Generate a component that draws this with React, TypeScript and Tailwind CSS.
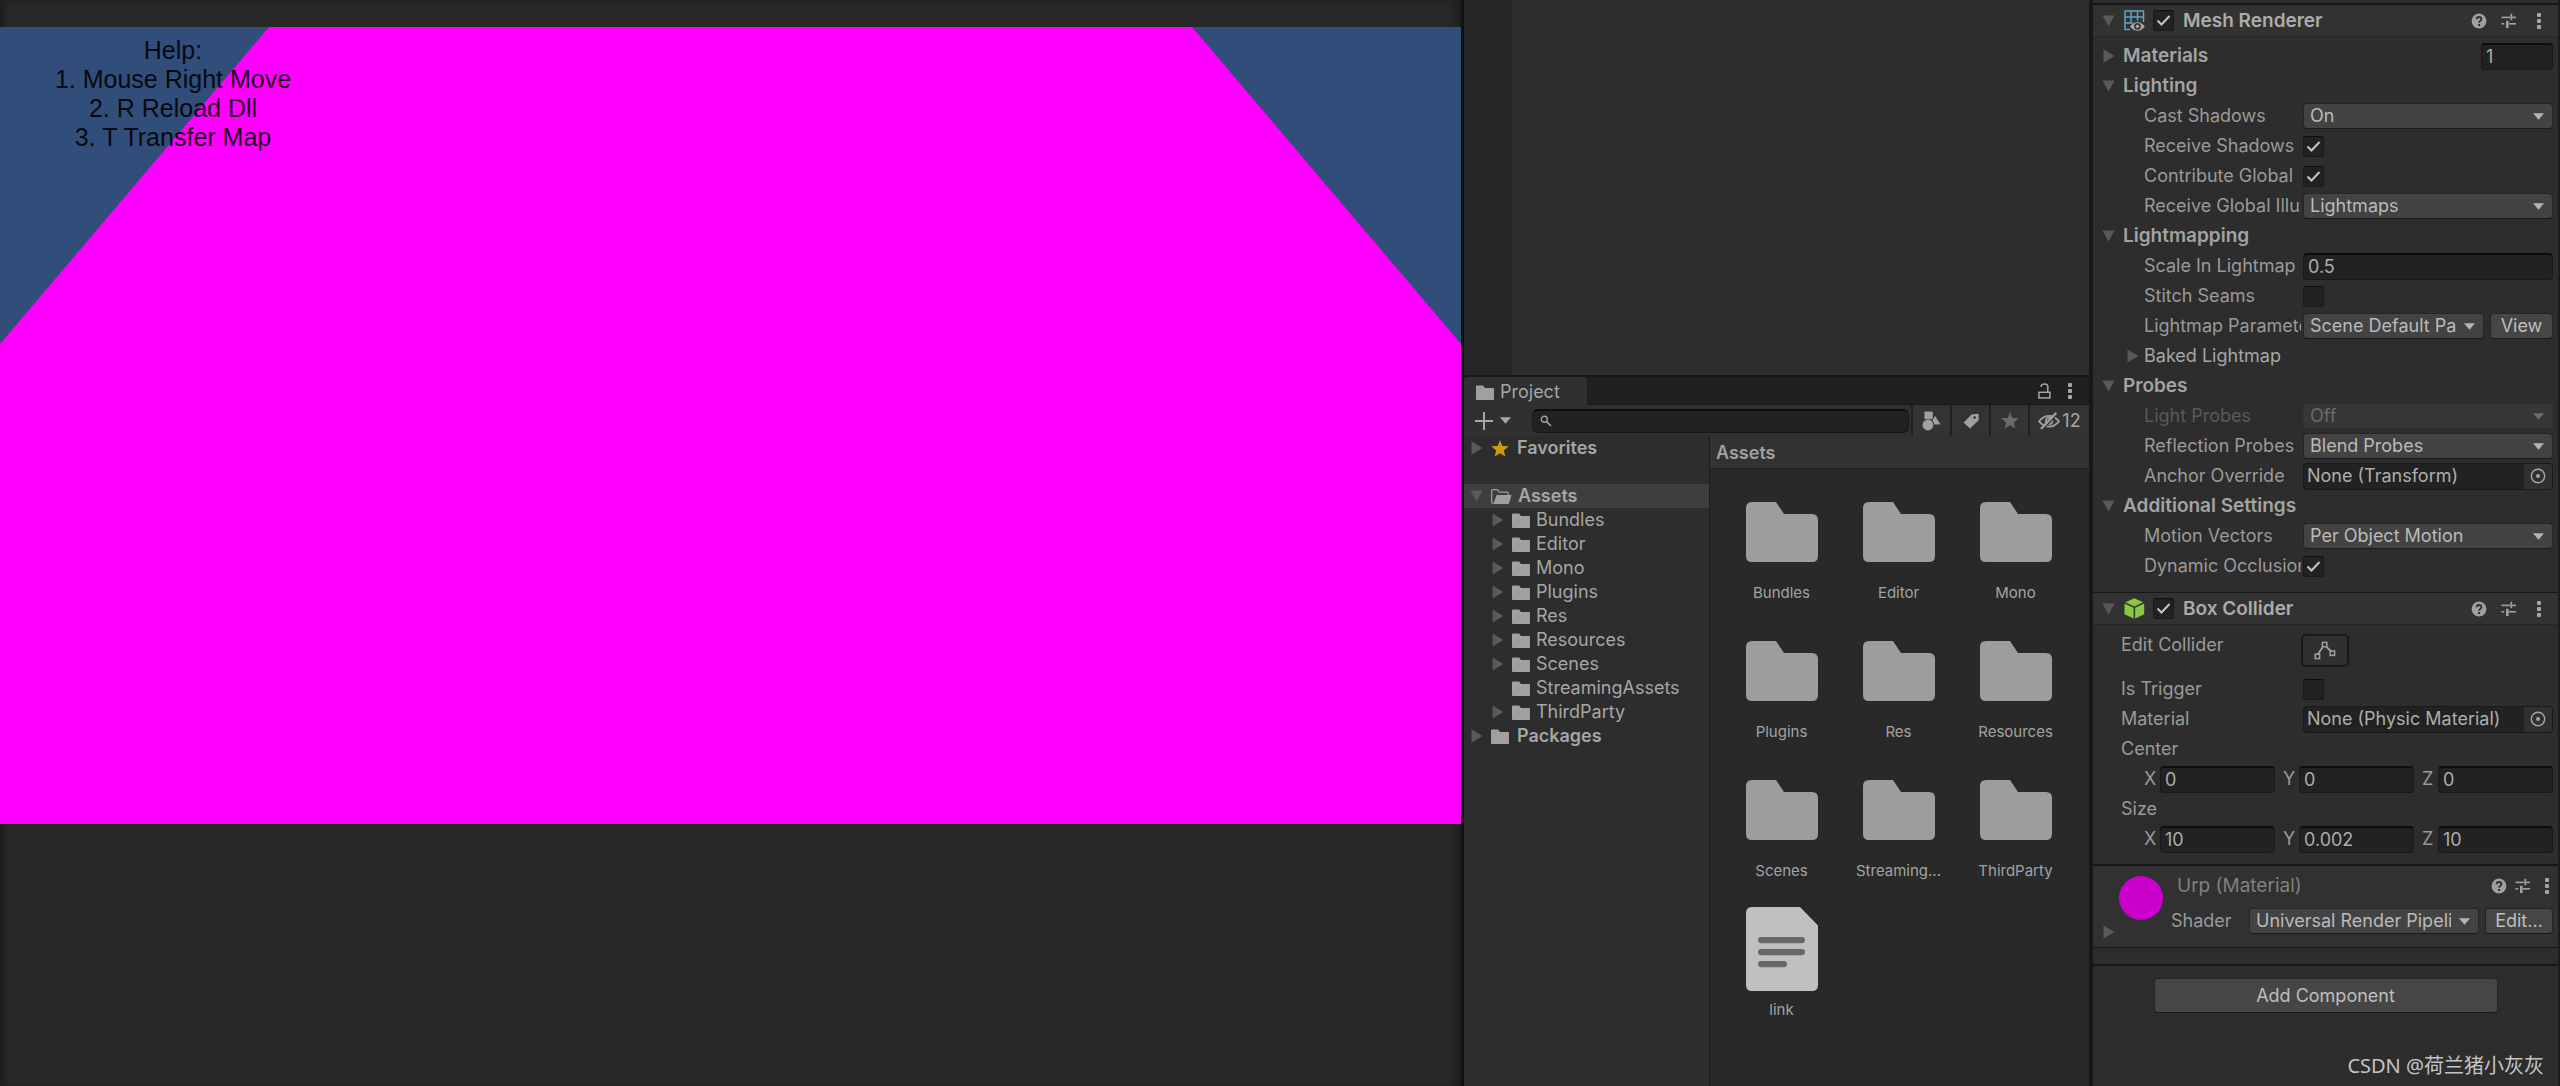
import React, { useId } from "react";

const CHILD_FOLDERS = [
  { name: "Bundles", nested: true },
  { name: "Editor", nested: true },
  { name: "Mono", nested: true },
  { name: "Plugins", nested: true },
  { name: "Res", nested: true },
  { name: "Resources", nested: true },
  { name: "Scenes", nested: true },
  { name: "StreamingAssets", nested: false },
  { name: "ThirdParty", nested: true },
];

const GRID_ITEMS = [
  "Bundles",
  "Editor",
  "Mono",
  "Plugins",
  "Res",
  "Resources",
  "Scenes",
  "Streaming...",
  "ThirdParty",
];

/* ---------- icons ---------- */

function FoldClosed() {
  return (
    <svg viewBox="0 0 12 14" className="h-[14px] w-3 shrink-0 fill-[#595959]" aria-hidden>
      <path d="M0.5 0.5L11.5 7L0.5 13.5Z" />
    </svg>
  );
}

function FoldOpen() {
  return (
    <svg viewBox="0 0 13 12" className="h-3 w-[13px] shrink-0 fill-[#595959]" aria-hidden>
      <path d="M0.5 0.5H12.5L6.5 11.5Z" />
    </svg>
  );
}

function Caret({ className }: { className: string }) {
  return (
    <svg viewBox="0 0 11 7" className={className} aria-hidden>
      <path d="M0 0.3H11L5.5 6.8Z" />
    </svg>
  );
}

function SmallFolder() {
  return (
    <svg viewBox="0 0 18 15" className="h-[15px] w-[18px] shrink-0 fill-[#a0a0a0]" aria-hidden>
      <path d="M0 1.5Q0 0.5 1 0.5H7L9 3H17Q18 3 18 4V14Q18 15 17 15H1Q0 15 0 14Z" />
    </svg>
  );
}

function OpenFolder() {
  return (
    <svg viewBox="0 0 21 15" className="h-[15px] w-[21px] shrink-0" aria-hidden>
      <path
        d="M2.6 14.2H1.7Q0.7 14.2 0.7 13.2V1.6Q0.7 0.7 1.7 0.7H6.6L8.4 3.2H16.4Q17.3 3.2 17.3 4.2V6"
        fill="none"
        stroke="#a0a0a0"
        strokeWidth="1.2"
      />
      <path d="M5.6 6H20.6L18 14.2Q17.8 15 17 15H2.4Z" fill="#a0a0a0" />
    </svg>
  );
}

function BigFolder() {
  return (
    <svg viewBox="0 0 72 60" className="h-[60px] w-[72px] fill-[#9d9d9d]" aria-hidden>
      <path d="M6 0H30L38 12H66Q72 12 72 18V54Q72 60 66 60H6Q0 60 0 54V6Q0 0 6 0Z" />
    </svg>
  );
}

function TextFile() {
  return (
    <svg viewBox="0 0 72 84" className="h-[84px] w-[72px]" aria-hidden>
      <path d="M6 0H54L72 18.5V78Q72 84 66 84H6Q0 84 0 78V6Q0 0 6 0Z" fill="#c0c0c0" />
      <g fill="#676767">
        <rect x="12" y="30" width="47" height="6.2" rx="3.1" />
        <rect x="12" y="42" width="47" height="6.2" rx="3.1" />
        <rect x="12" y="54" width="29" height="6.2" rx="3.1" />
      </g>
    </svg>
  );
}

function Star({ className }: { className: string }) {
  return (
    <svg viewBox="0 0 18 17" className={className} aria-hidden>
      <path d="M9 0L11.3 5.9L17.8 6.3L12.8 10.4L14.4 16.6L9 13.2L3.6 16.6L5.2 10.4L0.2 6.3L6.7 5.9Z" />
    </svg>
  );
}

function Dots() {
  return (
    <svg viewBox="0 0 4 16" className="h-4 w-1 fill-[#a6a6a6]" aria-hidden>
      <rect x="0" y="0" width="4" height="4" rx="0.9" />
      <rect x="0" y="6" width="4" height="4" rx="0.9" />
      <rect x="0" y="12" width="4" height="4" rx="0.9" />
    </svg>
  );
}

function HelpIcon() {
  return (
    <svg viewBox="0 0 16 16" className="size-4" aria-hidden>
      <circle cx="8" cy="8" r="7.4" fill="#a0a0a0" />
      <path
        d="M5.7 6.3Q5.7 4 8 4Q10.4 4 10.4 6.1Q10.4 7.3 9.2 8Q8.1 8.6 8.1 9.8"
        fill="none"
        stroke="#2f2f2f"
        strokeWidth="1.8"
      />
      <rect x="7.1" y="11" width="2" height="2" fill="#2f2f2f" />
    </svg>
  );
}

function PresetIcon() {
  return (
    <svg viewBox="0 0 16 16" className="size-4" fill="#a0a0a0" aria-hidden>
      <rect x="0.5" y="3.6" width="8.5" height="1.6" />
      <rect x="9.4" y="0.8" width="1.8" height="6.4" />
      <rect x="11" y="3.6" width="4" height="1.6" />
      <rect x="0.5" y="10" width="2.6" height="1.6" />
      <rect x="5" y="7.8" width="2.6" height="7.2" />
      <rect x="7.6" y="10" width="7.4" height="1.6" />
    </svg>
  );
}

function MeshIcon() {
  return (
    <svg viewBox="0 0 21 21" className="size-[21px] shrink-0" aria-hidden>
      <path
        d="M6 19.4H1V1H19.5V12M1 7H19.5M1 13H9M7 1V13M13.5 1V10.8"
        fill="none"
        stroke="#5aa6c4"
        strokeWidth="1.5"
      />
      <path d="M6 16.5Q9.5 12 13.4 12Q17.4 12 20.8 16.5Q17.4 20.8 13.4 20.8Q9.5 20.8 6 16.5Z" fill="#a6a6a6" />
      <circle cx="13.4" cy="16.4" r="3.3" fill="#323232" />
      <circle cx="13.4" cy="16.4" r="1.7" fill="#a6a6a6" />
    </svg>
  );
}

function CubeIcon() {
  return (
    <svg viewBox="0 0 21 21" className="size-[21px] shrink-0" fill="#8ac83f" aria-hidden>
      <path d="M10.3 0.3L19.2 4.3L10.3 8.4L1.4 4.3Z" />
      <path d="M0.5 5.6L9.6 9.8V20.6L0.5 16.2Z" />
      <path d="M20.2 5.6L11.1 9.8V20.6L20.2 16.2Z" />
    </svg>
  );
}

function LockIcon() {
  return (
    <svg viewBox="0 0 13 16" className="h-4 w-[13px]" fill="none" stroke="#a6a6a6" strokeWidth="1.5" aria-hidden>
      <rect x="0.9" y="9.3" width="11" height="5.6" />
      <path d="M3.2 4V3Q3.6 1 6.6 1Q9.8 1 9.8 3.6V9" />
    </svg>
  );
}

function SearchIcon() {
  return (
    <svg viewBox="0 0 12 12" className="size-3 shrink-0" fill="none" stroke="#a0a0a0" aria-hidden>
      <circle cx="4.3" cy="4.3" r="3" strokeWidth="1.4" />
      <path d="M6.6 6.6L11 11" strokeWidth="1.6" />
    </svg>
  );
}

function ShapesIcon() {
  return (
    <svg viewBox="0 0 19 20" className="h-5 w-[19px]" fill="#a0a0a0" aria-hidden>
      <rect x="2.4" y="0.6" width="8.4" height="7.6" />
      <circle cx="5.9" cy="14" r="5.4" />
      <path d="M13 4.8L18.6 13.6H12.4L10.6 9.4Z" />
    </svg>
  );
}

function TagIcon() {
  return (
    <svg viewBox="0 0 16 16" className="size-4" aria-hidden>
      <path d="M8.6 1.4L14.4 0.8Q15.6 0.8 15.6 2V7.2L7 15.4L0.6 9.4Z" fill="#a0a0a0" />
      <circle cx="11.6" cy="4.6" r="1.3" fill="#333333" />
    </svg>
  );
}

function HiddenEyeIcon() {
  return (
    <svg viewBox="0 0 22 18" className="h-[18px] w-[22px] shrink-0" fill="none" stroke="#a0a0a0" aria-hidden>
      <path d="M1 9.4Q5.4 3.8 11 3.8Q16.6 3.8 21 9.4Q16.6 14.6 11 14.6Q5.4 14.6 1 9.4Z" strokeWidth="1.8" />
      <circle cx="11" cy="9" r="3.2" strokeWidth="1.8" />
      <path d="M4.4 17.8L19.6 1.6" stroke="#333333" strokeWidth="1.6" />
      <path d="M3 17L18.4 0.8" strokeWidth="2.2" />
    </svg>
  );
}

function ColliderIcon() {
  return (
    <svg viewBox="0 0 22 19" className="h-[19px] w-[22px]" fill="none" stroke="#a0a0a0" aria-hidden>
      <g strokeWidth="1.5">
        <rect x="1.2" y="13.2" width="4.4" height="4.4" />
        <rect x="8.4" y="1.4" width="4.4" height="4.4" />
        <rect x="16.2" y="10" width="4.4" height="4.4" />
      </g>
      <path d="M4 13L8.8 6M12.4 6L17 10" strokeWidth="1.8" />
    </svg>
  );
}

/* ---------- form controls ---------- */

const LABEL = "min-w-0 overflow-hidden whitespace-nowrap";

function Tick({ checked, label, id }: { checked: boolean; label?: string; id?: string }) {
  return (
    <span className="grid size-[21px] shrink-0 grid-cols-1">
      <input
        id={id}
        type="checkbox"
        defaultChecked={checked}
        aria-label={label}
        className="peer col-start-1 row-start-1 size-[21px] appearance-none rounded-[3px] border border-[#191919] border-t-[#0d0d0d] bg-[#222222]"
      />
      <svg
        viewBox="0 0 21 21"
        className="pointer-events-none col-start-1 row-start-1 hidden size-[21px] peer-checked:block"
        fill="none"
        stroke="#c4c4c4"
        strokeWidth="2"
        aria-hidden
      >
        <path d="M4.5 10.5L8.5 14.5L16.5 6" />
      </svg>
    </span>
  );
}

function TextBox({ value, id, label, className }: { value: string; id?: string; label?: string; className: string }) {
  return (
    <input
      id={id}
      type="text"
      defaultValue={value}
      aria-label={label}
      className={
        "h-[27px] min-w-0 rounded-[4px] border border-[#191919] border-t-2 border-t-[#0d0d0d] bg-[#222222] px-1 text-[18px] text-[#adadad] outline-none " +
        className
      }
    />
  );
}

function Dropdown({
  value,
  id,
  disabled,
  tight,
}: {
  value: string;
  id: string;
  disabled?: boolean;
  tight?: boolean;
}) {
  return (
    <span className="relative flex min-w-0 flex-1">
      <select
        id={id}
        disabled={disabled}
        className={
          "h-[26px] w-full appearance-none overflow-hidden rounded-[4px] border pl-[6px] leading-6 opacity-100 outline-none " +
          (tight ? "pr-[27px] " : "pr-8 ") +
          (disabled
            ? "border-[#323232] bg-[#373737] text-[#6b6b6b]"
            : "border-[#252525] border-b-[#1b1b1b] bg-[#434343] text-[#bababa]")
        }
      >
        <option>{value}</option>
      </select>
      <Caret
        className={
          "pointer-events-none absolute top-[10px] right-[9px] h-[7px] w-[11px] " +
          (disabled ? "fill-[#6b6b6b]" : "fill-[#b4b4b4]")
        }
      />
    </span>
  );
}

function PushButton({ children, className }: { children: React.ReactNode; className: string }) {
  return (
    <button
      type="button"
      className={
        "rounded-[4px] border border-[#252525] border-b-[#1b1b1b] bg-[#464646] text-center text-[#bebebe] " +
        className
      }
    >
      {children}
    </button>
  );
}

function Section({ title }: { title: string }) {
  return (
    <div className="flex h-[30px] items-center gap-2 pr-[5px] pl-[9px] text-[19px] font-semibold text-[#a3a3a3]">
      <FoldOpen />
      <h3 className="flex-1">{title}</h3>
    </div>
  );
}

function Row({
  label,
  muted,
  outer,
  render,
}: {
  label: string;
  muted?: boolean;
  outer?: boolean;
  render?: (id: string) => React.ReactNode;
}) {
  const id = useId();
  return (
    <div className={"flex h-[30px] items-center pr-[5px] " + (outer ? "pl-7" : "pl-[51px]")}>
      <label
        htmlFor={id}
        className={
          LABEL + " shrink-0 " + (outer ? "w-[180px] " : "w-[157px] ") + (muted ? "text-[#595959]" : "text-[#9a9a9a]")
        }
      >
        {label}
      </label>
      <div className="ml-[2px] flex min-w-0 flex-1 items-center gap-[6px]">{render?.(id)}</div>
    </div>
  );
}

function ObjectField({ value, id }: { value: string; id: string }) {
  return (
    <div className="flex h-[27px] flex-1 items-center overflow-hidden rounded-[4px] border border-[#191919] bg-[#222222]">
      <input
        id={id}
        type="text"
        readOnly
        defaultValue={value}
        className="min-w-0 flex-1 bg-transparent pl-[3px] text-[#adadad] outline-none"
      />
      <button type="button" aria-label="Select object" className="flex h-full w-7 items-center justify-center bg-[#303030]">
        <svg viewBox="0 0 16 16" className="size-4" aria-hidden>
          <circle cx="8" cy="8" r="6.7" fill="none" stroke="#a6a6a6" strokeWidth="1.4" />
          <circle cx="8" cy="8" r="2" fill="#a6a6a6" />
        </svg>
      </button>
    </div>
  );
}

function Vector({ name, values }: { name: string; values: string[] }) {
  const axes = ["X", "Y", "Z"];
  return (
    <div className="flex h-[30px] items-center gap-2 pr-[5px] pl-[51px] text-[#9a9a9a]">
      {axes.map((axis, i) => (
        <label key={axis} className="flex min-w-0 flex-1 items-center">
          <span className="w-4 shrink-0">{axis}</span>
          <TextBox value={values[i]} label={name + " " + axis} className="w-full" />
        </label>
      ))}
    </div>
  );
}

function HeaderActions() {
  return (
    <div className="flex items-center gap-[14px] pr-[17px]">
      <button type="button" aria-label="Help">
        <HelpIcon />
      </button>
      <button type="button" aria-label="Presets">
        <PresetIcon />
      </button>
      <button type="button" aria-label="More" className="ml-[6px]">
        <Dots />
      </button>
    </div>
  );
}

function ComponentHeader({ title, icon }: { title: string; icon: React.ReactNode }) {
  return (
    <header className="flex h-8 items-center border-b border-[#262626] bg-[#323232] pl-[9px]">
      <FoldOpen />
      <span className="ml-[9px] flex">{icon}</span>
      <span className="ml-2 flex">
        <Tick checked label={"Enable " + title} />
      </span>
      <h2 className="ml-[9px] flex-1 text-[19px] font-semibold text-[#ababab]">{title}</h2>
      <HeaderActions />
    </header>
  );
}

/* ---------- panels ---------- */

function GamePanel() {
  return (
    <section className="relative flex min-w-0 flex-1 flex-col bg-[#282828] pt-[27px] shadow-[inset_8px_0_8px_-6px_#1a1a1a,inset_-12px_0_10px_-8px_#1a1a1a]">
      <div className="relative aspect-[1461/797] w-full">
        <svg viewBox="0 0 1461 797" preserveAspectRatio="none" className="block size-full" aria-hidden>
          <rect width="1461" height="797" fill="#ff00ff" />
          <path d="M0 0H269L0 317Z" fill="#314d79" />
          <path d="M1461 0H1192L1461 317Z" fill="#314d79" />
        </svg>
        <div className="absolute top-[9px] left-0 w-[346px] text-center font-['Liberation_Sans',Arial,sans-serif] text-[25px] leading-[29px] text-black/90">
          <p>Help:</p>
          <p>1. Mouse Right Move</p>
          <p>2. R Reload Dll</p>
          <p>3. T Transfer Map</p>
        </div>
      </div>
    </section>
  );
}

function ProjectToolbar() {
  const tool = "flex items-center justify-center bg-[#333333]";
  return (
    <div className="flex h-[31px] items-stretch bg-[#303030]">
      <button type="button" aria-label="Create" className="flex items-center gap-[7px] pl-[11px]">
        <svg viewBox="0 0 18 18" className="size-[18px]" fill="#a6a6a6" aria-hidden>
          <rect x="8" y="0" width="2" height="18" />
          <rect x="0" y="8" width="18" height="2" />
        </svg>
        <Caret className="h-[7px] w-[11px] fill-[#a6a6a6]" />
      </button>
      <label className="mr-[2px] ml-[21px] flex h-6 min-w-0 flex-1 items-center self-center rounded-[6px] border border-[#191919] border-t-2 border-t-[#0d0d0d] bg-[#222222] pl-[7px]">
        <SearchIcon />
        <input type="search" aria-label="Search assets" className="min-w-0 flex-1 bg-transparent px-2 outline-none" />
      </label>
      <div className="flex gap-[2px] bg-[#202020] pl-[2px]">
        <button type="button" aria-label="Search by type" className={tool + " w-[37px]"}>
          <ShapesIcon />
        </button>
        <button type="button" aria-label="Search by label" className={tool + " w-[37px]"}>
          <TagIcon />
        </button>
        <button type="button" aria-label="Save search" className={tool + " w-[37px]"}>
          <Star className="h-[17px] w-[18px] fill-[#6a6a6a]" />
        </button>
        <button type="button" className={tool + " w-[59px] gap-[2px] text-[#a6a6a6]"}>
          <HiddenEyeIcon />
          12
        </button>
      </div>
    </div>
  );
}

function ProjectTree() {
  return (
    <nav className="w-[245px] shrink-0 bg-[#2d2d2d] text-[#a6a6a6]">
      <div className="mb-6 flex h-6 items-center pl-[7px] font-semibold">
        <FoldClosed />
        <Star className="mr-2 ml-2 h-[17px] w-[18px] fill-[#cf9a0b]" />
        Favorites
      </div>
      <ul>
        <li>
          <div className="flex h-6 items-center bg-[#3e3e3e] pl-[6px] font-semibold">
            <FoldOpen />
            <span className="mr-[6px] ml-2 flex">
              <OpenFolder />
            </span>
            Assets
          </div>
          <ul>
            {CHILD_FOLDERS.map((f) => (
              <li key={f.name} className="flex h-6 items-center pl-7">
                <span className="mr-2 flex w-3">{f.nested && <FoldClosed />}</span>
                <SmallFolder />
                <span className="ml-[6px]">{f.name}</span>
              </li>
            ))}
          </ul>
        </li>
        <li className="flex h-6 items-center pl-[7px] font-semibold">
          <FoldClosed />
          <span className="mr-2 ml-2 flex">
            <SmallFolder />
          </span>
          Packages
        </li>
      </ul>
    </nav>
  );
}

function AssetGrid() {
  return (
    <div className="min-w-0 flex-1 border-l border-[#1a1a1a] bg-[#292929]">
      <div className="flex h-[33px] items-center border-b border-[#1f1f1f] bg-[#323232] pt-px pl-[6px] font-semibold text-[#a0a0a0]">
        Assets
      </div>
      <ul className="grid grid-cols-[repeat(auto-fill,117px)] pt-[21px] pl-[13px] text-[15px] leading-[22px] text-[#a3a3a3]">
        {GRID_ITEMS.map((name) => (
          <li key={name} className="flex h-[139px] flex-col items-center gap-2">
            <span className="flex h-[84px] items-center">
              <BigFolder />
            </span>
            {name}
          </li>
        ))}
        <li className="flex h-[139px] flex-col items-center gap-2">
          <TextFile />
          link
        </li>
      </ul>
    </div>
  );
}

function ProjectColumn() {
  return (
    <section className="flex w-[629px] shrink-0 flex-col border-r-4 border-[#181818]">
      <div className="flex h-[375px]">
        <div className="w-12 bg-[#262626]" />
        <div className="flex-1 bg-[#2d2d2d]" />
      </div>
      <div className="flex h-[30px] items-stretch border-t-2 border-[#181818] bg-[#202020]">
        <h2 className="flex w-[123px] items-center gap-[6px] rounded-t-[4px] bg-[#303030] pt-[2px] pl-3 text-[#a6a6a6]">
          <SmallFolder />
          Project
        </h2>
        <div className="flex flex-1 items-center justify-end gap-[17px] border-b border-[#191919] pr-[17px]">
          <button type="button" aria-label="Lock">
            <LockIcon />
          </button>
          <button type="button" aria-label="More">
            <Dots />
          </button>
        </div>
      </div>
      <ProjectToolbar />
      <div className="flex flex-1">
        <ProjectTree />
        <AssetGrid />
      </div>
    </section>
  );
}

function Inspector() {
  const materials = useId();
  const shader = useId();
  return (
    <section className="flex w-[467px] shrink-0 flex-col border-r-2 border-[#1c1c1c] bg-[#2d2d2d]">
      <div className="h-[5px] border-b-2 border-[#171717]" />
      <ComponentHeader title="Mesh Renderer" icon={<MeshIcon />} />
      <div className="pt-1 pb-[11px]">
        <div className="flex h-[30px] items-center gap-2 pr-[5px] pl-[10px] text-[19px] font-semibold text-[#a3a3a3]">
          <FoldClosed />
          <label htmlFor={materials} className="flex-1">
            Materials
          </label>
          <TextBox id={materials} value="1" className="w-[72px] font-normal" />
        </div>
        <Section title="Lighting" />
        <Row label="Cast Shadows" render={(id) => <Dropdown id={id} value="On" />} />
        <Row label="Receive Shadows" render={(id) => <Tick id={id} checked />} />
        <Row label="Contribute Global" render={(id) => <Tick id={id} checked />} />
        <Row label="Receive Global Illumination" render={(id) => <Dropdown id={id} value="Lightmaps" />} />
        <Section title="Lightmapping" />
        <Row label="Scale In Lightmap" render={(id) => <TextBox id={id} value="0.5" className="flex-1" />} />
        <Row label="Stitch Seams" render={(id) => <Tick id={id} checked={false} />} />
        <Row
          label="Lightmap Parameters"
          render={(id) => (
            <>
              <Dropdown id={id} value="Scene Default Parameters" tight />
              <PushButton className="h-[26px] w-[63px]">View</PushButton>
            </>
          )}
        />
        <div className="flex h-[30px] items-center gap-[5px] pl-[34px] text-[#a6a6a6]">
          <FoldClosed />
          Baked Lightmap
        </div>
        <Section title="Probes" />
        <Row label="Light Probes" muted render={(id) => <Dropdown id={id} value="Off" disabled />} />
        <Row label="Reflection Probes" render={(id) => <Dropdown id={id} value="Blend Probes" />} />
        <Row label="Anchor Override" render={(id) => <ObjectField id={id} value="None (Transform)" />} />
        <Section title="Additional Settings" />
        <Row label="Motion Vectors" render={(id) => <Dropdown id={id} value="Per Object Motion" />} />
        <Row label="Dynamic Occlusion" render={(id) => <Tick id={id} checked />} />
      </div>

      <div className="border-t border-[#171717]">
        <ComponentHeader title="Box Collider" icon={<CubeIcon />} />
      </div>
      <div className="pb-[10px]">
        <div className="flex h-[49px] items-start pt-[9px] pl-7 text-[#9a9a9a]">
          <span className="w-[180px] leading-[22px]">Edit Collider</span>
          <button
            type="button"
            aria-label="Edit Collider"
            className="flex h-[33px] w-12 items-center justify-center rounded-[5px] border-2 border-[#191919] bg-[#303030]"
          >
            <ColliderIcon />
          </button>
        </div>
        <Row outer label="Is Trigger" render={(id) => <Tick id={id} checked={false} />} />
        <Row outer label="Material" render={(id) => <ObjectField id={id} value="None (Physic Material)" />} />
        <div className="flex h-[30px] items-center pl-7 text-[#9a9a9a]">Center</div>
        <Vector name="Center" values={["0", "0", "0"]} />
        <div className="flex h-[30px] items-center pl-7 text-[#9a9a9a]">Size</div>
        <Vector name="Size" values={["10", "0.002", "10"]} />
      </div>

      <div className="flex h-[84px] border-t-2 border-b border-[#171717] bg-[#313131] pl-[10px]">
        <button type="button" aria-label="Expand material" className="mb-[8px] self-end">
          <FoldClosed />
        </button>
        <div className="mt-[10px] ml-[4px] size-11 shrink-0 rounded-full bg-[#cc00cc]" />
        <div className="flex min-w-0 flex-1 flex-col gap-[9px] pt-[6px] pl-2">
          <div className="flex h-[27px] items-center pl-[6px]">
            <h2 className="flex-1 text-[19px] text-[#808080]">Urp (Material)</h2>
            <div className="flex items-center gap-2 pr-[9px]">
              <button type="button" aria-label="Help">
                <HelpIcon />
              </button>
              <button type="button" aria-label="Presets">
                <PresetIcon />
              </button>
              <button type="button" aria-label="More" className="ml-[6px]">
                <Dots />
              </button>
            </div>
          </div>
          <div className="flex items-center gap-[6px] pr-[5px]">
            <label htmlFor={shader} className="w-[72px] text-[#9a9a9a]">
              Shader
            </label>
            <Dropdown id={shader} value="Universal Render Pipeline/Lit" tight />
            <PushButton className="h-[26px] w-[68px]">Edit...</PushButton>
          </div>
        </div>
      </div>
      <div className="h-[18px] border-b-2 border-[#171717]" />
      <div className="flex flex-1 flex-col justify-between pt-3">
        <PushButton className="mx-auto h-[35px] w-[344px]">Add Component</PushButton>
        <p className="pr-[14px] pb-[6px] text-right font-['Noto_Sans','Noto_Sans_CJK_SC',sans-serif] text-[20px] leading-7 text-[#c4c4c4]">
          CSDN @荷兰猪小灰灰
        </p>
      </div>
    </section>
  );
}

export default function App() {
  return (
    <main className="flex min-h-screen bg-[#282828] font-['Inter','Noto_Sans_CJK_SC',sans-serif] text-[18px] leading-6">
      <GamePanel />
      <div className="w-[3px] shrink-0 bg-[#101010]" />
      <ProjectColumn />
      <Inspector />
    </main>
  );
}
